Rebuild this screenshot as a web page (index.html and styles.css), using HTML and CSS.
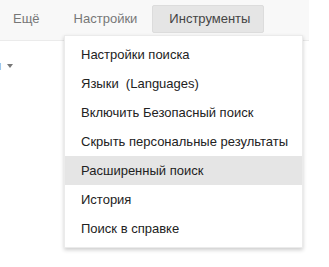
FILE: index.html
```html
<!DOCTYPE html>
<html lang="ru">
<head>
<meta charset="utf-8">
<link rel="stylesheet" href="styles.css">
</head>
<body>
<div class="page">
  <div class="header">
    <span class="tab tab-more">Ещё</span>
    <span class="tab tab-settings">Настройки</span>
    <span class="tool-btn">Инструменты</span>
  </div>
  <div class="filters">
    <span class="clip">и</span><span class="caret"></span>
  </div>
  <ul class="menu">
    <li class="item">Настройки поиска</li>
    <li class="item">Языки&nbsp; (Languages)</li>
    <li class="item">Включить Безопасный поиск</li>
    <li class="item">Скрыть персональные результаты</li>
    <li class="item item-active">Расширенный поиск</li>
    <li class="item">История</li>
    <li class="item">Поиск в справке</li>
  </ul>
</div>
</body>
</html>
```
FILE: styles.css
```css
html, body {
  margin: 0;
  padding: 0;
  background: #fff;
}
body {
  font-family: Arial, "Liberation Sans", sans-serif;
  font-size: 13px;
  color: #222;
}
.page {
  position: relative;
  width: 329px;
  height: 267px;
  overflow: hidden;
}
.header {
  width: 309px;
  height: 41px;
  box-sizing: border-box;
  padding-top: 5px;
  background: #f8f8f8;
  border-bottom: 1px solid #ebebeb;
  display: flex;
  align-items: flex-start;
}
.tab {
  height: 28px;
  line-height: 28px;
  color: #777;
}
.tab-more {
  margin-left: 13px;
}
.tab-settings {
  margin-left: 34px;
}
.tool-btn {
  margin-left: 15px;
  box-sizing: border-box;
  height: 28px;
  line-height: 26px;
  padding: 0 16px;
  width: 112px;
  background: #e5e5e5;
  border: 1px solid #dcdcdc;
  border-radius: 2px;
  color: #444;
}
.filters {
  display: flex;
  align-items: center;
  padding-top: 17px;
  height: 16px;
  line-height: 16px;
}
.clip {
  margin-left: -6px;
  color: #777;
}
.caret {
  margin-left: 6px;
  width: 0;
  height: 0;
  border-left: 3px solid transparent;
  border-right: 3px solid transparent;
  border-top: 4px solid #777;
}
.menu {
  position: absolute;
  left: 64px;
  top: 35px;
  width: 239px;
  margin: 0;
  padding: 4px 0;
  list-style: none;
  background: #fff;
  box-sizing: border-box;
  border: 1px solid rgba(0, 0, 0, 0.08);
  box-shadow: 0 2px 4px rgba(0, 0, 0, 0.2);
}
.item {
  height: 29px;
  line-height: 29px;
  padding-left: 16px;
  color: #222;
  white-space: nowrap;
}
.item-active {
  background: #e5e5e5;
}
```
